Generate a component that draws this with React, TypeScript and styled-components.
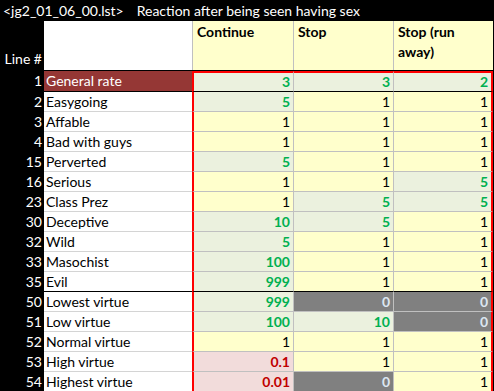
import React from "react";
import styled, { createGlobalStyle, css } from "styled-components";

const Global = createGlobalStyle`
  html, body { margin: 0; padding: 0; background: #000; }
  body { font-family: Lato, "Open Sans", sans-serif; font-size: 14px; }
`;

const Sheet = styled.div`
  width: 494px;
  height: 391px;
  background: #000;
  overflow: hidden;
`;

const TitleBar = styled.div`
  height: 21px;
  display: flex;
  align-items: center;
  gap: 13px;
  padding-left: 3px;
  color: #fff;
  font-size: 14px;
  line-height: 21px;
`;

const Cols = css`
  display: grid;
  grid-template-columns: 44px 148px 102px 100px 99px;
  width: 493px;
`;

const HeaderRow = styled.div`
  ${Cols};
  height: 49px;
  border-bottom: 1px solid #000;
  box-sizing: content-box;
`;

const LineHead = styled.div`
  color: #fff;
  display: flex;
  align-items: flex-end;
  justify-content: flex-end;
  padding: 0 2px 0 0;
  line-height: 20px;
  padding-bottom: 1px;
`;

const LabelHead = styled.div`
  background: #fff;
`;

const ColHead = styled.div<{ $first?: boolean; $last?: boolean }>`
  background: #ffffcc;
  box-sizing: border-box;
  border-left: ${(p) => (p.$first ? "1px solid #c0c0c0" : "none")};
  border-right: ${(p) => (p.$last ? "none" : "1px solid #c0c0c0")};
  font-weight: bold;
  color: #000;
  padding: 1px 3px 0 4px;
  line-height: 20px;
`;

type Tone = "y" | "g" | "x" | "p";

const Row = styled.div<{ $top?: boolean; $line: string }>`
  ${Cols};
  height: ${(p) => (p.$top ? 21 : 20)}px;
  box-sizing: border-box;
`;

const LineNo = styled.div`
  color: #fff;
  text-align: right;
  padding-right: 2px;
  line-height: 19px;
`;

const Label = styled.div<{ $accent?: boolean; $line: string }>`
  background: ${(p) => (p.$accent ? "#953735" : "#fff")};
  color: ${(p) => (p.$accent ? "#fff" : "#000")};
  border-bottom: 1px solid ${(p) => p.$line};
  box-sizing: border-box;
  padding-left: 2px;
  line-height: 19px;
  white-space: nowrap;
`;

const toneBg: Record<Tone, string> = {
  y: "#ffffcc",
  g: "#ebf1de",
  x: "#808080",
  p: "#f2dcdb",
};
const toneFg: Record<Tone, string> = {
  y: "#000",
  g: "#00b050",
  x: "#dce6f1",
  p: "#c00000",
};

const Cell = styled.div<{
  $tone: Tone;
  $col: number;
  $top?: boolean;
  $line: string;
}>`
  background: ${(p) => toneBg[p.$tone]};
  color: ${(p) => toneFg[p.$tone]};
  font-weight: ${(p) => (p.$tone === "y" ? "normal" : "bold")};
  box-sizing: border-box;
  text-align: right;
  padding-right: 3px;
  line-height: 19px;
  border-bottom: 1px solid ${(p) => p.$line};
  border-top: ${(p) => (p.$top ? "2px solid #ff0000" : "none")};
  border-left: ${(p) => (p.$col === 0 ? "2px solid #ff0000" : "none")};
  border-right: ${(p) =>
    p.$col === 2 ? "2px solid #ff0000" : "1px solid #c0c0c0"};
  ${(p) => p.$top && "line-height: 18px;"}
`;

type R = { n: number; label: string; v: [string, Tone][]; line?: string };

const rows: R[] = [
  { n: 1, label: "General rate", v: [["3", "g"], ["3", "g"], ["2", "g"]], line: "#000" },
  { n: 2, label: "Easygoing", v: [["5", "g"], ["1", "y"], ["1", "y"]] },
  { n: 3, label: "Affable", v: [["1", "y"], ["1", "y"], ["1", "y"]] },
  { n: 4, label: "Bad with guys", v: [["1", "y"], ["1", "y"], ["1", "y"]] },
  { n: 15, label: "Perverted", v: [["5", "g"], ["1", "y"], ["1", "y"]] },
  { n: 16, label: "Serious", v: [["1", "y"], ["1", "y"], ["5", "g"]] },
  { n: 23, label: "Class Prez", v: [["1", "y"], ["5", "g"], ["5", "g"]] },
  { n: 30, label: "Deceptive", v: [["10", "g"], ["5", "g"], ["1", "y"]] },
  { n: 32, label: "Wild", v: [["5", "g"], ["1", "y"], ["1", "y"]] },
  { n: 33, label: "Masochist", v: [["100", "g"], ["1", "y"], ["1", "y"]] },
  { n: 35, label: "Evil", v: [["999", "g"], ["1", "y"], ["1", "y"]], line: "#000" },
  { n: 50, label: "Lowest virtue", v: [["999", "g"], ["0", "x"], ["0", "x"]] },
  { n: 51, label: "Low virtue", v: [["100", "g"], ["10", "g"], ["0", "x"]] },
  { n: 52, label: "Normal virtue", v: [["1", "y"], ["1", "y"], ["1", "y"]] },
  { n: 53, label: "High virtue", v: [["0.1", "p"], ["1", "y"], ["1", "y"]] },
  { n: 54, label: "Highest virtue", v: [["0.01", "p"], ["0", "x"], ["1", "y"]], line: "#000" },
];

export default function App() {
  return (
    <Sheet>
      <Global />
      <TitleBar>
        <span>{"<jg2_01_06_00.lst>"}</span>
        <span>Reaction after being seen having sex</span>
      </TitleBar>
      <HeaderRow>
        <LineHead>Line #</LineHead>
        <LabelHead />
        <ColHead $first>Continue</ColHead>
        <ColHead>Stop</ColHead>
        <ColHead $last>Stop (run away)</ColHead>
      </HeaderRow>
      {rows.map((r, i) => {
        const top = i === 0;
        const line = r.line ?? "#c0c0c0";
        const labelLine = r.line ?? "#d4d4d4";
        return (
          <Row key={r.n} $top={top} $line={line}>
            <LineNo>{r.n}</LineNo>
            <Label $accent={top} $line={labelLine}>
              {r.label}
            </Label>
            {r.v.map(([val, tone], c) => (
              <Cell key={c} $tone={tone} $col={c} $top={top} $line={line}>
                {val}
              </Cell>
            ))}
          </Row>
        );
      })}
    </Sheet>
  );
}
